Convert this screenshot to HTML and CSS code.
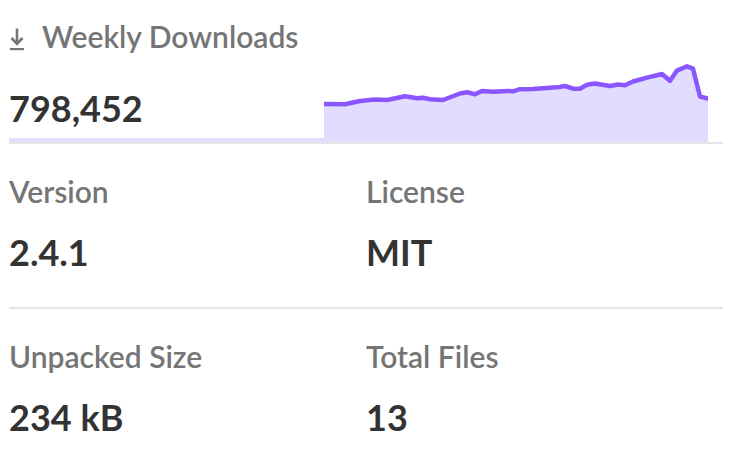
FILE: index.html
```html
<!DOCTYPE html>
<html lang="en">
<head>
<meta charset="utf-8">
<title>Package stats</title>
<link rel="stylesheet" href="styles.css">
</head>
<body>
<aside class="sidebar">
  <section class="downloads">
    <h3 class="downloads-title">
      <svg class="dl-icon" width="24" height="36" viewBox="0 0 24 36" aria-hidden="true">
        <path d="M8 10.5 V25.5" fill="none" stroke="#757575" stroke-width="2.6"/>
        <path d="M2.5 20 L8 25.8 L13.5 20" fill="none" stroke="#757575" stroke-width="2.6"/>
        <rect x="1" y="30" width="14" height="2.2" fill="#757575"/>
      </svg>
      <span>Weekly Downloads</span>
    </h3>
    <div class="downloads-row">
      <p class="downloads-count">798,452</p>
      <svg class="sparkline" width="384" height="82" viewBox="324 60 384 82" aria-hidden="true">
        <path class="spark-fill" d="M324 104 L345 104.3 L360 101 L375 99.6 L387 100 L405 96.3 L417 98.3 L423 97.7 L430 99.3 L443 100 L460 93.5 L467 92.3 L475 94.3 L482 90.9 L493 91.7 L507 90.9 L513 91.3 L520 89.2 L533 89 L560 86.9 L565 86 L573 88.7 L580 88.7 L587 84.8 L595 83.5 L610 86 L618 84.5 L625 85.3 L633 81.5 L648 77.4 L662 74 L670 80.8 L677 70.6 L687 66.3 L693 68.7 L700 96.5 L708 98.6 L708 142 L324 142 Z"/>
        <path class="spark-line" d="M324 104 L345 104.3 L360 101 L375 99.6 L387 100 L405 96.3 L417 98.3 L423 97.7 L430 99.3 L443 100 L460 93.5 L467 92.3 L475 94.3 L482 90.9 L493 91.7 L507 90.9 L513 91.3 L520 89.2 L533 89 L560 86.9 L565 86 L573 88.7 L580 88.7 L587 84.8 L595 83.5 L610 86 L618 84.5 L625 85.3 L633 81.5 L648 77.4 L662 74 L670 80.8 L677 70.6 L687 66.3 L693 68.7 L700 96.5 L708 98.6"/>
      </svg>
    </div>
  </section>

  <section class="stats">
    <div class="stat">
      <h3 class="stat-label">Version</h3>
      <p class="stat-value">2.4.1</p>
    </div>
    <div class="stat">
      <h3 class="stat-label">License</h3>
      <p class="stat-value">MIT</p>
    </div>
  </section>

  <section class="stats stats-last">
    <div class="stat">
      <h3 class="stat-label">Unpacked Size</h3>
      <p class="stat-value">234 kB</p>
    </div>
    <div class="stat">
      <h3 class="stat-label">Total Files</h3>
      <p class="stat-value">13</p>
    </div>
  </section>
</aside>
</body>
</html>
```
FILE: styles.css
```css
* {
  box-sizing: border-box;
}

html, body {
  margin: 0;
  padding: 0;
  background: #ffffff;
}

body {
  font-family: Lato, "Open Sans", "Noto Sans", sans-serif;
  color: #333333;
}

.sidebar {
  width: 714px;
  margin-left: 9px;
}

h3, p {
  margin: 0;
}

.downloads {
  padding-top: 18px;
}

.downloads-title {
  display: flex;
  align-items: flex-start;
  font-size: 30px;
  line-height: 36px;
  font-weight: 600;
  color: #757575;
}

.dl-icon {
  display: block;
  flex: none;
  margin-right: 9px;
}

.downloads-row {
  display: flex;
  align-items: flex-end;
  margin-top: 6px;
  border-bottom: 2px solid #e5e5e5;
}

.downloads-count {
  flex: 0 0 315px;
  font-size: 36px;
  line-height: 44px;
  font-weight: 700;
  color: #333333;
  padding-bottom: 8px;
  border-bottom: 4px solid #e2ddff;
}

.sparkline {
  display: block;
  flex: none;
}

.spark-fill {
  fill: #e2ddff;
}

.spark-line {
  fill: none;
  stroke: #8956ff;
  stroke-width: 4.5;
  stroke-linejoin: round;
  stroke-linecap: round;
}

.stats {
  display: grid;
  grid-template-columns: 1fr 1fr;
  padding: 29px 0 33px;
  border-bottom: 2px solid #e5e5e5;
}

.stats-last {
  border-bottom: none;
}

.stat-label {
  font-size: 30px;
  line-height: 36px;
  font-weight: 600;
  color: #757575;
}

.stat-value {
  margin-top: 21px;
  font-size: 36px;
  line-height: 44px;
  font-weight: 700;
  color: #333333;
}
```
